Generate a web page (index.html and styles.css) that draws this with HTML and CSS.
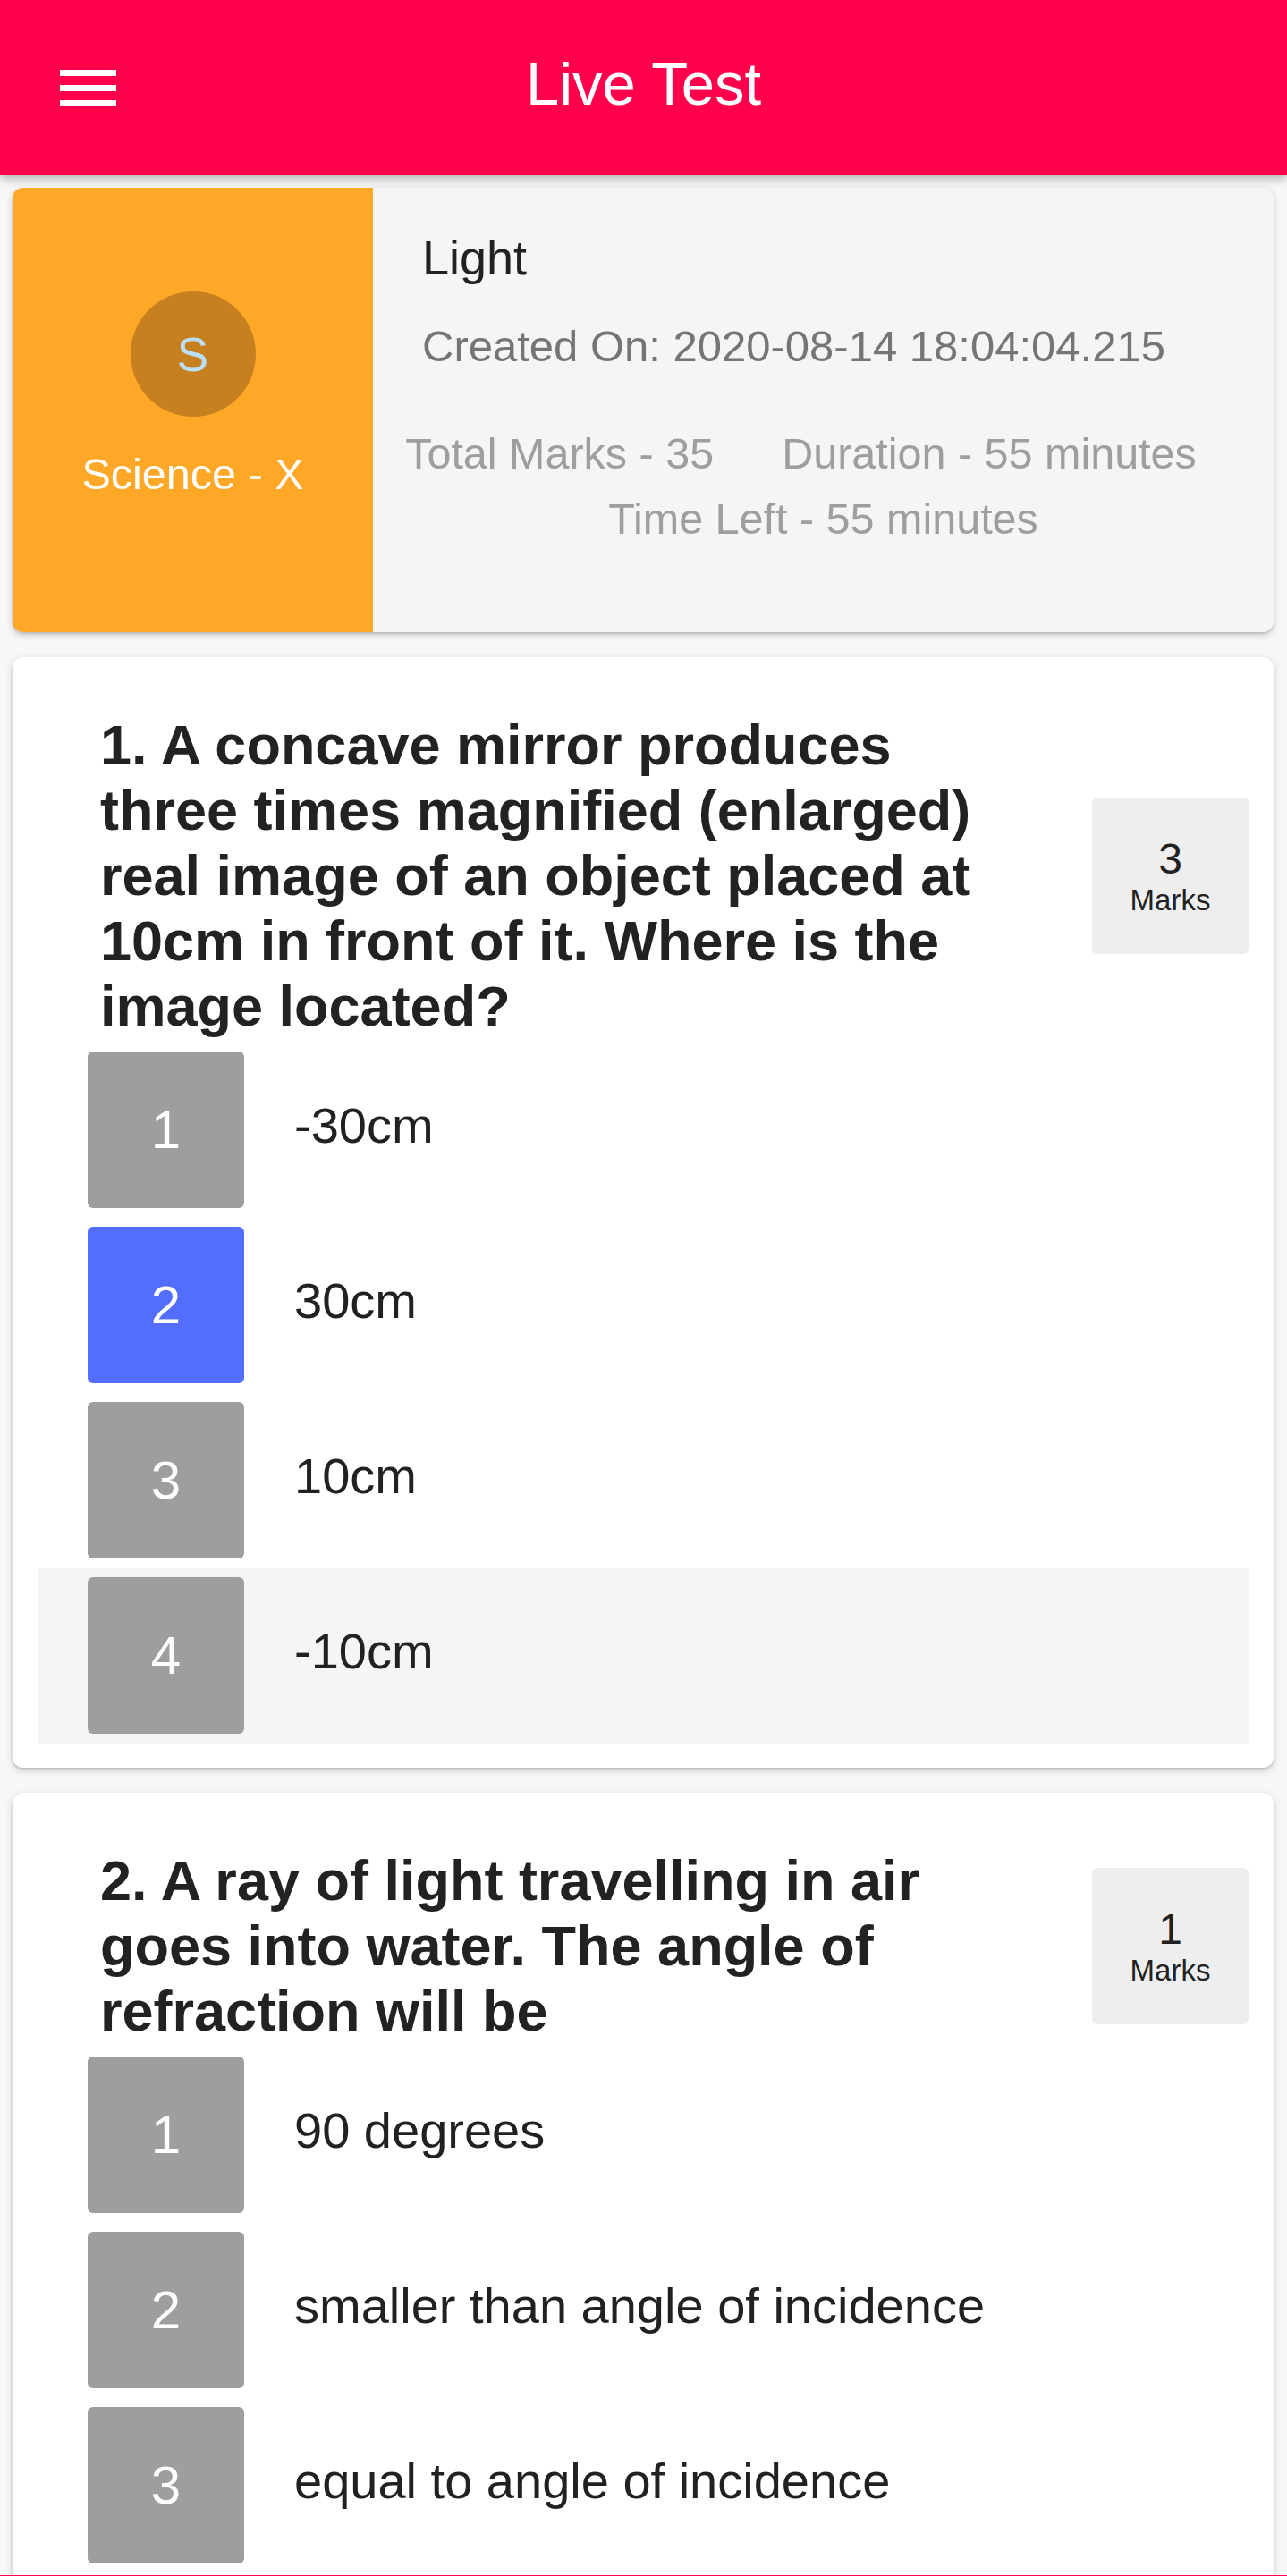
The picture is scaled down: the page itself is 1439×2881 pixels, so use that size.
FILE: index.html
```html
<!DOCTYPE html>
<html lang="en">
<head>
<meta charset="utf-8">
<title>Live Test</title>
<link rel="stylesheet" href="styles.css">
</head>
<body>
<header class="appbar">
  <div class="appbar-left">
    <svg class="menu-icon" width="63" height="41" viewBox="0 0 63 41" aria-hidden="true">
      <rect x="0" y="0" width="63" height="7" fill="#fff"/>
      <rect x="0" y="17" width="63" height="7" fill="#fff"/>
      <rect x="0" y="34" width="63" height="7" fill="#fff"/>
    </svg>
  </div>
  <h1 class="appbar-title">Live Test</h1>
  <div class="appbar-right"></div>
</header>

<main class="content">
  <section class="card info-card">
    <div class="subject">
      <div class="avatar">S</div>
      <div class="subject-name">Science - X</div>
    </div>
    <div class="test-info">
      <div class="test-title">Light</div>
      <div class="test-created">Created On: 2020-08-14 18:04:04.215</div>
      <div class="test-stats">
        <span>Total Marks - 35</span>
        <span>Duration - 55 minutes</span>
      </div>
      <div class="test-left">Time Left - 55 minutes</div>
    </div>
  </section>

  <section class="card question-card">
    <div class="question-head">
      <div class="question-text">1. A concave mirror produces three times magnified (enlarged) real image of an object placed at 10cm in front of it. Where is the image located?</div>
      <div class="marks"><span class="marks-num">3</span><span class="marks-label">Marks</span></div>
    </div>
    <ul class="options">
      <li class="option"><span class="opt-num">1</span><span class="opt-text">-30cm</span></li>
      <li class="option"><span class="opt-num selected">2</span><span class="opt-text">30cm</span></li>
      <li class="option"><span class="opt-num">3</span><span class="opt-text">10cm</span></li>
      <li class="option hovered"><span class="opt-num">4</span><span class="opt-text">-10cm</span></li>
    </ul>
  </section>

  <section class="card question-card">
    <div class="question-head">
      <div class="question-text">2. A ray of light travelling in air goes into water. The angle of refraction will be</div>
      <div class="marks"><span class="marks-num">1</span><span class="marks-label">Marks</span></div>
    </div>
    <ul class="options">
      <li class="option"><span class="opt-num">1</span><span class="opt-text">90 degrees</span></li>
      <li class="option"><span class="opt-num">2</span><span class="opt-text">smaller than angle of incidence</span></li>
      <li class="option"><span class="opt-num">3</span><span class="opt-text">equal to angle of incidence</span></li>
    </ul>
  </section>
</main>
<div class="bottom-edge"></div>
</body>
</html>
```

FILE: styles.css
```css
* { box-sizing: border-box; }

html, body {
  margin: 0;
  padding: 0;
}

body {
  background: #f7f7f7;
  font-family: "Liberation Sans", Arial, sans-serif;
  color: #212121;
}

.appbar {
  height: 196px;
  background: #ff004c;
  display: grid;
  grid-template-columns: 1fr auto 1fr;
  align-items: center;
  box-shadow: 0 4px 10px rgba(0, 0, 0, 0.28);
  position: relative;
  z-index: 2;
}

.appbar-left {
  padding-left: 67px;
  display: flex;
  align-items: center;
}

.menu-icon { display: block; }

.appbar-title {
  margin: 0 0 10px 0;
  font-size: 67px;
  font-weight: 400;
  color: #ffffff;
  line-height: normal;
}

.content {
  padding: 14px 15px 0 14px;
  display: flex;
  flex-direction: column;
  gap: 28px;
}

.card {
  border-radius: 12px;
  box-shadow: 0 3px 8px rgba(0, 0, 0, 0.18), 0 2px 3px rgba(0, 0, 0, 0.12);
  overflow: hidden;
}

/* info card */
.info-card {
  display: flex;
  height: 497px;
  background: #f5f5f5;
}

.subject {
  width: 403px;
  flex: none;
  background: #ffa726;
  display: flex;
  flex-direction: column;
  align-items: center;
  padding-top: 116px;
}

.avatar {
  width: 140px;
  height: 140px;
  border-radius: 50%;
  background: #c6801f;
  color: #bbdefb;
  font-size: 53px;
  display: flex;
  align-items: center;
  justify-content: center;
  line-height: 1;
}

.subject-name {
  margin-top: 36px;
  font-size: 48.5px;
  color: #ffffff;
  line-height: normal;
}

.test-info {
  flex: 1;
  padding-top: 47px;
  padding-left: 55px;
}

.test-title {
  font-size: 54px;
  color: #212121;
  line-height: normal;
}

.test-created {
  margin-top: 40px;
  font-size: 49px;
  color: #757575;
  line-height: normal;
}

.test-stats {
  margin: 64px 0 0 -55px;
  display: flex;
  justify-content: center;
  gap: 76px;
  padding-right: 50px;
  font-size: 48.5px;
  color: #9e9e9e;
  line-height: normal;
}

.test-left {
  margin: 17px 0 0 -55px;
  text-align: center;
  font-size: 48.5px;
  color: #9e9e9e;
  line-height: normal;
}

/* question cards */
.question-card {
  background: #ffffff;
  padding: 62px 28px 27px 28px;
}

.question-head {
  display: flex;
  align-items: center;
  padding-left: 70px;
}

.question-text {
  flex: 1;
  font-size: 63px;
  line-height: 73px;
  font-weight: 700;
  color: #222222;
}

.marks {
  flex: none;
  width: 175px;
  height: 175px;
  margin-left: 80px;
  background: #eeeeee;
  border-radius: 6px;
  display: flex;
  flex-direction: column;
  align-items: center;
  justify-content: center;
  color: #212121;
  line-height: normal;
}

.marks-num { font-size: 48px; }
.marks-label { font-size: 33px; }

.options {
  list-style: none;
  margin: 4px 0 0 0;
  padding: 0;
}

.option {
  display: flex;
  align-items: center;
  padding: 10px 0 11px 56px;
}

.option.hovered { background: #f5f5f5; }

.opt-num {
  width: 175px;
  height: 175px;
  flex: none;
  border-radius: 6px;
  background: #9e9e9e;
  color: #ffffff;
  font-size: 60px;
  display: flex;
  align-items: center;
  justify-content: center;
  line-height: 1;
}

.opt-num.selected { background: #536dfe; }

.opt-text {
  margin-left: 56px;
  padding-bottom: 11px;
  font-size: 56px;
  color: #212121;
  line-height: normal;
}

.bottom-edge {
  position: fixed;
  left: 0;
  right: 0;
  bottom: 0;
  height: 1px;
  background: #ff004c;
  z-index: 3;
}
```
